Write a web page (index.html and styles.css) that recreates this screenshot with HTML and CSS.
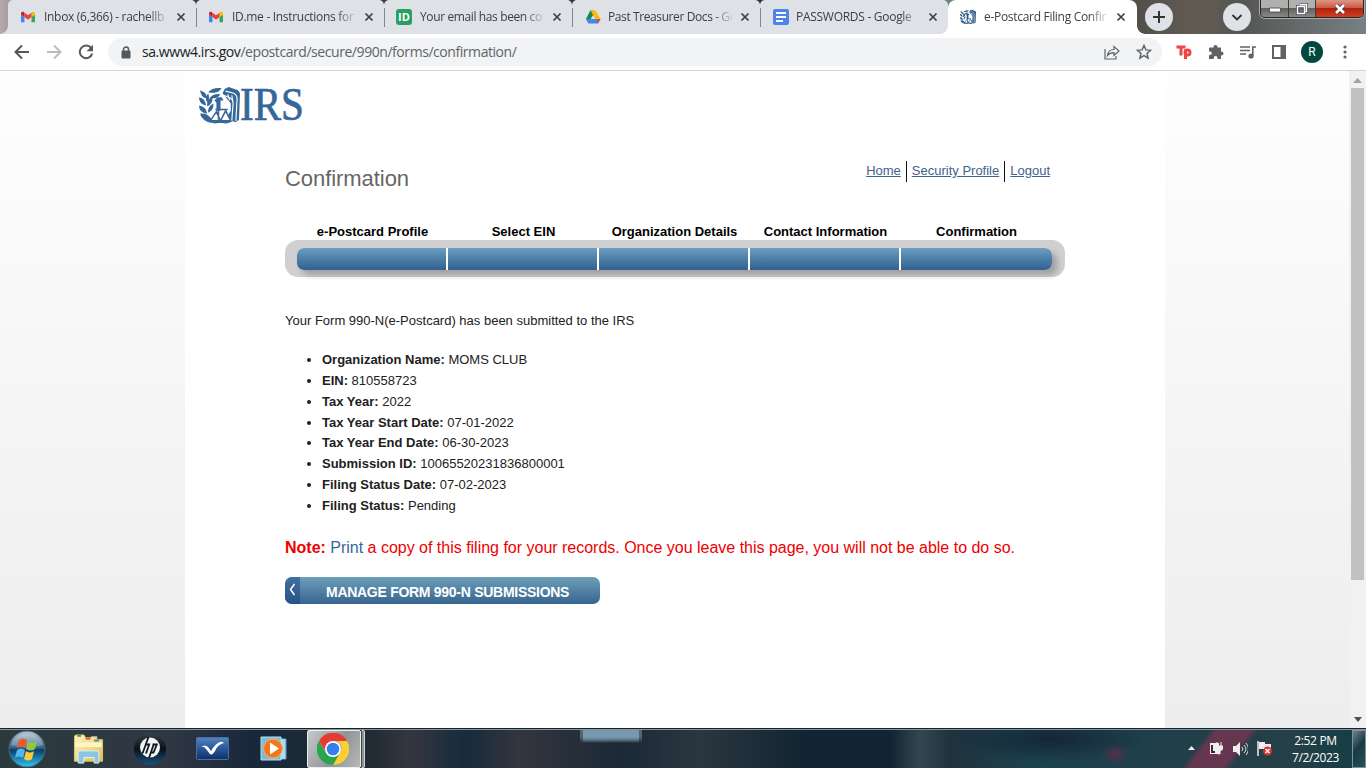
FILE: index.html
```html
<!DOCTYPE html>
<html lang="en">
<head>
<meta charset="utf-8">
<title>e-Postcard Filing Confirmation</title>
<link rel="stylesheet" href="styles.css">
</head>
<body>
<svg width="0" height="0" class="defs">
  <defs>
    <symbol id="gmail" viewBox="0 0 16 12"><path fill="#4285f4" d="M1 12h3V6L0 3v8a1 1 0 0 0 1 1"/><path fill="#34a853" d="M12 12h3a1 1 0 0 0 1-1V3l-4 3"/><path fill="#fbbc04" d="M12 1v5l4-3V2c0-2-2-2.500-3-1.700"/><path fill="#ea4335" d="M4 6V1l4 3 4-3v5L8 9"/><path fill="#c5221f" d="M0 2v1l4 3V1L3 .3C2-.5 0 0 0 2"/></symbol>
    <symbol id="close" viewBox="0 0 10 10"><path d="M1.500 1.500l7 7m0-7l-7 7" stroke="#3c4043" stroke-width="1.700"/></symbol>
    <symbol id="emblem" viewBox="0 0 40 36">
      <g fill="currentColor">
        <path d="M9 5q4-5 13-4q-2 4-7 4.500q-4 .5-6-.5"/>
        <path d="M10 11q4-5 11-4q-3 4-6 4z"/>
        <path d="M1 3l4 2q3 2 2 6q-5-1-6-8M9 6q2 6-1 9q-3-4 1-9"/>
        <path d="M0 10q6 1 7 8q-7-1-7-8M13 10q1 6-5 9q-1-7 5-9"/>
        <path d="M0 18q7 1 8 8q-8-1-8-8M14 16q1 6-5 9q-1-6 5-9"/>
        <path d="M1 26q7-1 11 5v4Q3 33 1 26"/>
        <path d="M15 13l3-3h4l2 3h-3v10h-4V15z"/>
        <path d="M25 2l4-2 9 3 2 3-1 26-3 2-5-1-3-5 3-5v-7l-8-10z"/>
      </g>
      <g fill="none" stroke="#fff" stroke-width="1.100">
        <path d="M26 4l8 2q4 2 3 8l-1 19"/>
        <path d="M24 8l7 3q3 2 2 8l-1 14"/>
        <path d="M28 7l2 6M32 8l1 6M26 12l4 6"/>
      </g>
      <g fill="none" stroke="currentColor" stroke-width="1.500">
        <path d="M16 22h12M19 22v10M17 24l-6 9h10zM26 23l-5 10h10z" fill="#fff"/>
        <path d="M11 33q5 3 10 0q5 3 10 0" stroke-width="2.200"/>
      </g>
    </symbol>
    <linearGradient id="orb" x2="0" y2="1"><stop stop-color="#b5cbd6"/><stop offset=".48" stop-color="#315d7c"/><stop offset=".52" stop-color="#0a3d67"/><stop offset="1" stop-color="#2bc7f4"/></linearGradient>
    <linearGradient id="hp" x2="0" y2="1"><stop stop-color="#334149"/><stop offset=".5" stop-color="#0a1118"/><stop offset="1" stop-color="#165181"/></linearGradient>
    <linearGradient id="blue" x2="0" y2="1"><stop stop-color="#5584bc"/><stop offset=".5" stop-color="#2a589a"/><stop offset="1" stop-color="#102f66"/></linearGradient>
    <linearGradient id="folder" x2="1" y2="1"><stop stop-color="#fff7c2"/><stop offset="1" stop-color="#e2bd55"/></linearGradient>
  </defs>
</svg>

<header class="tabstrip">
  <div class="tab first"><svg class="fav gm"><use href="#gmail"/></svg><span class="title">Inbox (6,366) - rachellb</span><svg class="x"><use href="#close"/></svg></div>
  <div class="tab"><svg class="fav gm"><use href="#gmail"/></svg><span class="title">ID.me - Instructions for</span><svg class="x"><use href="#close"/></svg></div>
  <div class="tab"><span class="fav idme">ID</span><span class="title t-mail">Your email has been co</span><svg class="x"><use href="#close"/></svg></div>
  <div class="tab"><svg class="fav" viewBox="0 0 16 16"><path fill="#188b4c" d="M5.300 1.500h3L10.500 5 4 14.500 1 10"/><path fill="#ffba00" d="M5.500 1.500h5L15.500 10h-5"/><path fill="#4285f4" d="M4 10h11.500l-2.500 4.500H3.500L1 10"/><path fill="#ea4335" d="M12 10h3.500L13 14.500"/><path fill="#dee1e6" d="M8 6l2.300 4H5.700"/></svg><span class="title t-drive">Past Treasurer Docs - Go</span><svg class="x"><use href="#close"/></svg></div>
  <div class="tab before"><svg class="fav" viewBox="0 0 16 16"><rect width="16" height="16" rx="2" fill="#4b85e8"/><path d="M3 4h10M3 8h10M3 12h7" stroke="#fff" stroke-width="1.800"/></svg><span class="title t-pass">PASSWORDS - Google</span><svg class="x"><use href="#close"/></svg></div>
  <div class="tab active"><svg class="fav irsfav"><use href="#emblem"/></svg><span class="title t-post">e-Postcard Filing Confir</span><svg class="x"><use href="#close"/></svg></div>
  <div class="round plus"><svg width="14" height="14"><path d="M7 1v12M1 7h12" stroke="#333" stroke-width="2"/></svg></div>
  <div class="round search"><svg width="12" height="12"><path d="M1.500 4l4.500 4.500L10.500 4" fill="none" stroke="#333" stroke-width="1.800"/></svg></div>
  <div class="winctl">
    <span class="min"><svg width="12" height="6"><path d="M.5 1h11v4H.5z" fill="#fff" stroke="#535862"/></svg></span>
    <span class="max"><svg width="12" height="12"><path d="M3.500 1.500h7v7h-2M1.500 3.500h7v7h-7z" fill="none" stroke="#444b58" stroke-width="2.800"/><path d="M3.500 1.500h7v7h-2M1.500 3.500h7v7h-7z" fill="none" stroke="#fff" stroke-width="1.400"/></svg></span>
    <span class="cls"><svg width="12" height="10"><path d="M2 1l8 8m0-8L2 9" stroke="#4c3038" stroke-width="4.400"/><path d="M2 1l8 8m0-8L2 9" stroke="#fff" stroke-width="2.800"/></svg></span>
  </div>
</header>

<nav class="toolbar">
  <svg class="nv" viewBox="0 0 16 16"><path d="M15 8H2M8 1.500L1.500 8 8 14.500" fill="none" stroke="#55595e" stroke-width="2"/></svg>
  <svg class="nv fwd" viewBox="0 0 16 16"><path d="M1 8h13M8 1.500L14.500 8 8 14.500" fill="none" stroke="#babcbe" stroke-width="2"/></svg>
  <svg class="nv rel" viewBox="0 0 16 16"><path d="M13.200 4.200A6.300 6.300 0 1 0 14.200 9.500" fill="none" stroke="#55595e" stroke-width="2"/><path d="M15 .8v6.400H8.600z" fill="#55595e"/></svg>
  <div class="omnibox">
    <svg class="lock" width="10" height="13" viewBox="0 0 10 13"><path d="M2.500 6V3.500a2.500 2.500 0 0 1 5 0V6" fill="none" stroke="#55595e" stroke-width="1.500"/><rect x=".5" y="4.500" width="9" height="8" rx="1" fill="#55595e"/></svg>
    <span class="url"><b>sa.www4.irs.gov</b>/epostcard/secure/990n/forms/confirmation/</span>
    <svg class="share" width="16" height="15" viewBox="0 0 16 15"><path d="M1 4v10h11v-3M3.500 10.500C4 6.500 6.500 4.500 10 4.500V1.500L15 6l-5 4.500V7.700c-3 0-5 .8-6.500 2.800z" fill="none" stroke="#5f6368" stroke-width="1.200"/></svg>
    <svg class="star" width="16" height="16" viewBox="0 0 16 16"><path d="M8 1.500l1.900 4.400 4.700.4-3.600 3.100 1.100 4.700L8 11.600l-4.100 2.500L5 9.400 1.400 6.300l4.700-.4z" fill="none" stroke="#5f6368" stroke-width="1.500"/></svg>
  </div>
  <div class="exts">
    <svg width="16" height="16" viewBox="0 0 16 16"><g fill="none" stroke="#ee4448" stroke-width="3"><path d="M.5 3h9M5 3v8.500"/><path d="M9.500 5.500V15"/><circle cx="11.500" cy="8.500" r="2.500"/></g></svg>
    <svg width="16" height="16" viewBox="0 0 16 16"><path fill="#5f6368" d="M2 3.500h3.500V3a2 2 0 0 1 4 0v.5h3.500v4h.5a2 2 0 0 1 0 4H13V15H9.500v-1a1.900 1.900 0 0 0-3.800 0v1H1v-4h1a1.800 1.800 0 0 0 0-3.600H1v-3q0-.9 1-.9"/></svg>
    <svg width="16" height="14" viewBox="0 0 16 14"><path d="M0 2h10M0 5.500h10M0 9h6M12.800 11V2H16" stroke="#5f6368" stroke-width="1.600" fill="none"/><circle cx="11" cy="11" r="2.600" fill="#5f6368"/></svg>
    <svg width="14" height="14" viewBox="0 0 14 14"><path fill="#5f6368" fill-rule="evenodd" d="M0 0h14v14H0zM2 2v10h6.500V2z"/></svg>
    <span class="avatar">R</span>
    <svg class="dots" width="4" height="14"><g fill="#5f6368"><circle cx="2" cy="2" r="1.600"/><circle cx="2" cy="7" r="1.600"/><circle cx="2" cy="12" r="1.600"/></g></svg>
  </div>
</nav>

<div class="viewport">
  <main class="page">
    <svg class="logo" width="108" height="40" viewBox="0 0 108 40"><svg class="mark" x="0" y="2" width="41" height="37" viewBox="0 0 40 36"><use href="#emblem"/></svg><text class="irs" x="41" y="35" textLength="64" lengthAdjust="spacingAndGlyphs">IRS</text></svg>
    <div class="head"><h1>Confirmation</h1><ul class="links"><li><a>Home</a></li><li><a>Security Profile</a></li><li><a>Logout</a></li></ul></div>
    <div class="labels"><span>e-Postcard Profile</span><span>Select EIN</span><span>Organization Details</span><span>Contact Information</span><span>Confirmation</span></div>
    <div class="track"><div class="steps"><i></i><i></i><i></i><i></i><i></i></div></div>
    <p class="sent">Your Form 990-N(e-Postcard) has been submitted to the IRS</p>
    <ul class="details">
      <li><b>Organization Name:</b> MOMS CLUB</li>
      <li><b>EIN:</b> 810558723</li>
      <li><b>Tax Year:</b> 2022</li>
      <li><b>Tax Year Start Date:</b> 07-01-2022</li>
      <li><b>Tax Year End Date:</b> 06-30-2023</li>
      <li><b>Submission ID:</b> 10065520231836800001</li>
      <li><b>Filing Status Date:</b> 07-02-2023</li>
      <li><b>Filing Status:</b> Pending</li>
    </ul>
    <p class="note"><b>Note:</b> <a>Print</a> a copy of this filing for your records. Once you leave this page, you will not be able to do so.</p>
    <div class="manage"><span class="chev"><svg width="7" height="14"><path d="M5.500 1L1.500 6.500l4 5.500" fill="none" stroke="#fff" stroke-width="1.500"/></svg></span><span class="mlabel">MANAGE FORM 990-N SUBMISSIONS</span></div>
  </main>
  <aside class="scroll"><svg width="9" height="5"><path d="M0 5l4.500-5L9 5" fill="#a3a3a3"/></svg><div class="thumb"></div><svg class="down" width="8" height="5"><path d="M0 0h8L4 5" fill="#505050"/></svg></aside>
</div>

<footer class="taskbar">
  <svg class="orb" width="38" height="38" viewBox="0 0 38 38"><circle cx="19" cy="19" r="18" fill="url(#orb)" stroke="#45667c"/><path d="M3 15C8 0 30 0 35 15Q19 20 3 15" fill="#fff" opacity=".22"/><path fill="#ec592b" d="M11 10q4-3 8 0l-2 8q-4-3-8 0"/><path fill="#8fc645" d="M20 11q4 3 9 0l-2 8q-4 3-9 0"/><path fill="#58b5ec" d="M9 20q4-3 8 0l-2 8q-4-3-8 0"/><path fill="#ffca37" d="M18 21q4 3 8 0l-2 8q-4 3-8 0"/></svg>
  <svg class="fold" width="33" height="30" viewBox="0 0 34 32"><path d="M2 3q0-2 2-2h8l2 3h5l1-1h6v3h6v23H2z" fill="url(#folder)" stroke="#ddc574"/><path d="M5 2h4" stroke="#26a644" stroke-width="2"/><path d="M14 5h5" stroke="#d95740" stroke-width="2"/><path d="M23 7h5" stroke="#3d88bd" stroke-width="2"/><path d="M3 9h28v5H3z" fill="#fff5c4"/><path d="M6 31V20q0-2 2-2h18q2 0 2 2v11h-5v-6H12v6z" fill="#8bc5df" stroke="#d5f3ff"/></svg>
  <svg class="hpi" width="34" height="34" viewBox="0 0 34 34"><circle cx="17" cy="17" r="16" fill="url(#hp)"/><circle cx="17" cy="15.500" r="10" fill="#f5f5f5"/><g stroke="#101820" fill="none" stroke-width="1.800"><path d="M15.500 5l-6 16.500M12.500 12.500h3.700L13 21.500"/><path d="M21 11.500l-5 14.500M19.500 12.500h4.300L20.500 20.500h-3"/></g></svg>
  <svg class="chk" width="33" height="23" viewBox="0 0 33 23"><rect x=".5" y=".5" width="32" height="22" rx="1" fill="url(#blue)" stroke="#4470a8"/><path d="M5 10q4-3 7 0l3 4q4-7 9-9 2-1 4 1-6 1-9 8-3 5-5 3l-4-5q-2-3-5-2" fill="#fff"/></svg>
  <svg class="wmp" width="28" height="26" viewBox="0 0 28 26"><path d="M4 3h22v20H7z" fill="#8cc7e2" stroke="#5ba2cc"/><path d="M1 1h20v23H1z" fill="#7fbadb" stroke="#b3e2f3"/><path d="M22 3v20M24 3v20" stroke="#d1eefa"/><circle cx="13" cy="12.500" r="9.500" fill="#f07820" stroke="#ffb16b"/><path d="M10 6.500v12l9-6" fill="#fff"/></svg>
  <div class="chrome"><svg width="32" height="32" viewBox="-16 -16 32 32"><path fill="#e63b32" d="M-14-8A16 16 0 0 1 14-8H0L-6 4"/><path fill="#fdcf32" d="M14-8A16 16 0 0 1 0 16L7 4A8 8 0 0 0 4-8"/><path fill="#2ca34f" d="M0 16A16 16 0 0 1-14-8l7 12A8 8 0 0 0 6 5"/><circle r="8" fill="#fff"/><circle r="6.300" fill="#377fe8"/></svg></div>
  <div class="chromestack"></div>
  <div class="tray">
    <svg width="7" height="5"><path d="M0 4l3.500-4L7 4" fill="#eee"/></svg>
    <svg class="plug" width="14" height="15" viewBox="0 0 14 15"><path d="M1 2h9v11H1z" fill="#eee"/><path d="M3 4v7h3" stroke="#322d37" stroke-width="2" fill="none"/><path d="M8 1v4M12 1v4M6 5h8v3l-3 2v3H8v-3L6 8z" fill="#eee" stroke="#eee"/><path d="M0 9v5h3M8 14h2" stroke="#d01345" stroke-width="1.500" fill="none"/></svg>
    <svg class="vol" width="15" height="14" viewBox="0 0 15 14"><path d="M0 4h3l4-4v14l-4-4H0" fill="#eee"/><path d="M9 5q2 2 0 4M11 3q4 4 0 8M13 1q5 6 0 12" stroke="#ddd" fill="none"/></svg>
    <svg class="flag" width="16" height="15" viewBox="0 0 16 15"><path d="M1 0v15" stroke="#eee" stroke-width="1.500"/><path d="M2 1h6v2h6v7H7V8H2" fill="#eee"/><circle cx="10.500" cy="10" r="4.500" fill="#dc322d"/><path d="M8.500 8l4 4m0-4l-4 4" stroke="#fff" stroke-width="1.500"/></svg>
    <div class="clock"><span>2:52 PM</span><span>7/2/2023</span></div>
    <div class="desk"></div>
  </div>
</footer>
</body>
</html>
```
FILE: styles.css
```css
* { box-sizing: border-box; }
body { margin: 0; width: 1366px; height: 768px; overflow: hidden; display: flex; flex-direction: column; font-family: "Liberation Sans", sans-serif; color: #212121; background: #fff; }
svg { display: block; flex: none; }
.defs { position: absolute; }
ul, h1, p { margin: 0; padding: 0; }

.tabstrip { height: 34px; flex: none; display: flex; padding-left: 8px; background: linear-gradient(90deg, #b7a9ae 0, #3d4148 70px, #29323b 800px, #6b817e 945px, #514f4b 1130px, #625b52 1200px, #555 1240px, #768183 1366px); }
.tab { width: 188px; flex: none; position: relative; display: flex; align-items: center; padding-left: 13px; background: #dee1e6; border-radius: 5px 5px 0 0; font: 12px "Open Sans", sans-serif; color: #3c4043; }
.tab:not(.before):not(.active)::after { content: ""; position: absolute; right: -1px; top: 8px; width: 1px; height: 19px; background: #80868b; z-index: 1; }
.tab.first::before { content: ""; position: absolute; left: -8px; bottom: 0; width: 8px; height: 8px; background: radial-gradient(circle at 0 0, transparent 7.5px, #dee1e6 8px); }
.tab.before::before { content: ""; position: absolute; right: 0; bottom: 0; width: 8px; height: 8px; background: radial-gradient(circle at 0 0, transparent 7.5px, #fff 8px); }
.tab.active { background: #fff; width: 189px; padding-left: 12px; border-radius: 8px 8px 0 0; }
.tab.active::after { content: ""; position: absolute; right: -8px; bottom: 0; width: 8px; height: 8px; background: radial-gradient(circle at 100% 0, transparent 7.5px, #fff 8px); }
.fav { width: 16px; height: 16px; margin-right: 7px; flex: none; }
.gm { width: 14px; height: 12px; margin-right: 9px; }
.irsfav { color: #24527f; margin-right: 8px; }
.idme { border-radius: 3px; background: #26a162; color: #fff; font: bold 11px/16px "Open Sans", sans-serif; text-align: center; margin-left: -1px; margin-right: 8px; }
.title { width: 124px; white-space: nowrap; letter-spacing: -.3px; line-height: 20px; -webkit-mask-image: linear-gradient(90deg, #000 104px, transparent 126px); mask-image: linear-gradient(90deg, #000 104px, transparent 126px); }
.t-mail { letter-spacing: -.38px; }
.t-drive { letter-spacing: -.4px; }
.t-pass { letter-spacing: -.28px; }
.t-post { letter-spacing: -.3px; }
.x { width: 10px; height: 10px; margin-left: 8px; }
.round { width: 28px; height: 28px; border-radius: 50%; background: #dee1e6; display: flex; align-items: center; justify-content: center; margin-top: 3px; flex: none; }
.plus { margin-left: 8px; }
.search { margin-left: 50px; }
.winctl { display: flex; width: 104px; height: 18px; flex: none; margin-left: 9px; border: 1px solid #252729; border-top: 0; border-radius: 0 0 5px 5px; overflow: hidden; box-shadow: 0 0 0 1px #aaa; }
.winctl span { display: flex; align-items: center; justify-content: center; background: linear-gradient(#b0b0ae 0 45%, #62615f 50%, #8b8985); border-right: 1px solid #3d3d3d; }
.winctl .min { width: 28px; padding-top: 3px; }
.winctl .max { width: 27px; }
.winctl .cls { flex: 1; border: 0; background: linear-gradient(#dc9685 0, #cb5a42 45%, #b3200c 50%, #cf4022); }

.toolbar { height: 37px; flex: none; display: flex; align-items: center; padding-left: 14px; background: #fff; border-bottom: 1px solid #d4d5d7; }
.nv { width: 16px; height: 16px; }
.fwd, .rel { margin-left: 16px; }
.omnibox { width: 1054px; height: 28px; margin-left: 14px; border-radius: 14px; background: #f1f3f4; display: flex; align-items: center; padding-left: 13px; }
.url { width: 951px; margin-left: 11px; color: #5f6368; font: 14px/20px "Open Sans", sans-serif; letter-spacing: -.44px; white-space: nowrap; }
.url b { font-weight: 400; color: #202124; }
.share { margin-left: 11px; }
.star { margin-left: 16px; }
.exts { display: flex; align-items: center; margin-left: 14px; gap: 16px; }
.avatar { width: 22px; height: 22px; border-radius: 50%; background: #00493f; color: #fff; font: 12px/22px Roboto, sans-serif; text-align: center; margin-left: -1px; }
.dots { margin-left: 4px; }

.viewport { height: 657px; flex: none; display: flex; background: linear-gradient(#fefefe, #ededed); }
.page { width: 980px; margin-left: 185px; padding: 14px 0 0 100px; background: #fff; }
.logo { margin-left: -86px; }
.mark { color: #356799; }
.irs { font: 46px "Liberation Serif", serif; fill: #356799; stroke: #356799; stroke-width: .7; }
.head { height: 99px; display: flex; justify-content: space-between; padding: 36px 110px 0 0; }
h1 { font-size: 22px; font-weight: 400; line-height: 36px; letter-spacing: -.06px; color: #666; white-space: nowrap; }
.links { display: flex; list-style: none; font-size: 13px; line-height: 20px; }
.links li { height: 21px; padding: 0 5px; border-right: 1px solid #111; white-space: nowrap; }
.links li:last-child { border: 0; }
.links a { color: #41638e; text-decoration: underline; }
.labels { display: flex; width: 755px; margin-left: 12px; height: 16px; font-size: 13px; line-height: 16px; font-weight: 700; color: #000; }
.labels span { width: 151px; text-align: center; white-space: nowrap; }
.track { width: 780px; height: 37px; padding: 8px 12px; border-radius: 13px; background: #d0d0d0; }
.steps { display: flex; gap: 2px; width: 755px; height: 22px; border-radius: 7px; overflow: hidden; background: #fff; box-shadow: 5px 5px 6px rgba(70, 70, 70, .35); }
.steps i { width: 149px; flex: none; background: linear-gradient(#6c9fc0, #4f82aa 45%, #335f92); }
.steps i:last-child { flex: 1; }
.sent { margin-top: 36px; font-size: 13px; line-height: 16px; }
.details { margin-top: 21px; padding-left: 37px; font-size: 13px; line-height: 20.85px; }
.note { margin-top: 21px; font-size: 16px; line-height: 20px; color: #e00; letter-spacing: -.01px; white-space: nowrap; }
.note a { color: #356799; }
.manage { width: 315px; height: 27px; margin-top: 19px; display: flex; border-radius: 7px; overflow: hidden; background: linear-gradient(#6c9fb8, #38648f); color: #fff; font-size: 14px; line-height: 31px; font-weight: 700; }
.chev { width: 15px; padding: 6px 0 0 4px; background: linear-gradient(#416f9d, #28538a); }
.mlabel { margin-left: 26px; letter-spacing: -.28px; white-space: nowrap; }
.scroll { width: 17px; margin-left: 184px; background: #f1f1f1; padding: 7px 2px 6px; display: flex; flex-direction: column; align-items: center; }
.thumb { width: 13px; height: 492px; margin-top: 5px; background: #c1c1c1; }
.down { margin-top: auto; }

.taskbar { height: 40px; flex: none; display: flex; align-items: center; padding-left: 8px; border-top: 1px solid #102331; box-shadow: inset 0 1px #8a969e; color: #fff;
  background:
    linear-gradient(#7898ae 8px, transparent) 583px 0 / 56px 14px no-repeat,
    linear-gradient(#7898ae88 8px, transparent) 580px 0 / 62px 14px no-repeat,
    linear-gradient(127deg, transparent 21px, #65364f 27px 54px, transparent 61px) 1184px 0 / 74px 40px no-repeat,
    radial-gradient(ellipse 14px 10px at 1115px 25px, #56304a, transparent),
    radial-gradient(ellipse 100px 24px at 1050px 10px, #142637, transparent),
    linear-gradient(90deg, #2b3a3c, #303744 170px, #18283a 250px, #202b34 370px, #35363f 410px, #172b3b 465px, #34353e 520px, #1b2936 620px, #2b3640 700px, #102431 810px, #102431 890px, #344751 920px, #20323d 950px, #1b424e 1030px, #203f49 1170px, #263f48 1290px, #123d45 1366px); }
.fold { margin-left: 26px; }
.hpi { margin-left: 28px; }
.chk { margin-left: 29px; }
.wmp { margin-left: 31px; }
.chrome { width: 54px; height: 38px; margin-left: 19px; padding-left: 9px; display: flex; align-items: center; border: 1px solid #eee; border-radius: 2px; background: linear-gradient(120deg, #c6cacb, #8f9495 55%, #b6b8b9); }
.chromestack { width: 4px; height: 38px; border: 1px solid #cfd2d3; border-left-color: #444; background: #8f9495; border-radius: 0 2px 2px 0; }
.tray { margin-left: auto; display: flex; align-items: center; }
.plug { margin-left: 14px; }
.vol { margin-left: 10px; }
.flag { margin-left: 9px; }
.clock { width: 70px; margin-left: 9px; padding-right: 3px; display: flex; flex-direction: column; align-items: center; font: 12px/17px "Open Sans", sans-serif; letter-spacing: -.35px; }
.desk { width: 14px; height: 38px; border: 1px solid #819096; background: linear-gradient(130deg, #718189, #163b44 45%, #285057); }
```
